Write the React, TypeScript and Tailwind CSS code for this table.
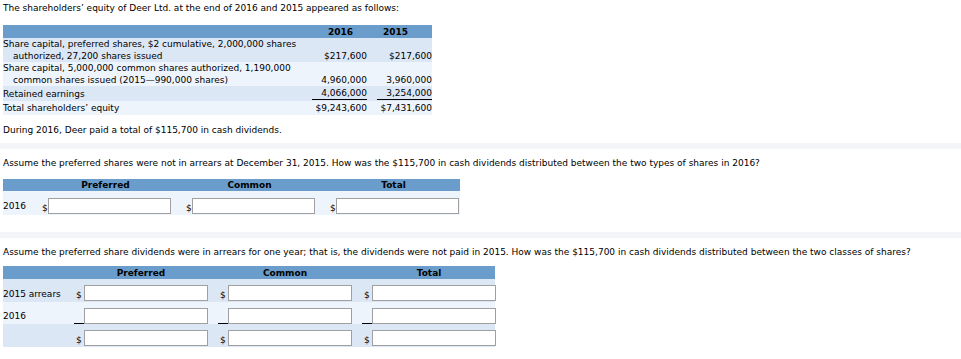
const equityRows = [
    { label: ["Share capital, preferred shares, $2 cumulative, 2,000,000 shares", "authorized, 27,200 shares issued"], v2016: "$217,600", v2015: "$217,600", dark: true },
    { label: ["Share capital, 5,000,000 common shares authorized, 1,190,000", "common shares issued (2015\u2014990,000 shares)"], v2016: "4,960,000", v2015: "3,960,000", dark: false },
    { label: ["Retained earnings"], v2016: "4,066,000", v2015: "3,254,000", dark: true, underline: true },
    { label: ["Total shareholders\u2019 equity"], v2016: "$9,243,600", v2015: "$7,431,600", dark: false },
];

function Field({ cell, input, rule = false }: { cell: string; input: string; rule?: boolean }) {
    return (
        <div className={`${cell} shrink-0 flex items-end justify-end ${rule ? "border-b border-black" : ""}`}>
            <span className="flex-1 leading-[12px] pl-[2px]">{rule ? "" : "$"}</span>
            <input
                type="text"
                className={`${input} shrink-0 h-[16px] border border-[#a0a0a0] bg-white outline-none ${rule ? "-mb-px" : ""}`}
            />
        </div>
    );
}

function Band() {
    return <div className="h-[6px] w-full bg-[#f3f5f8]"></div>;
}

export default function App() {
    return (
        <div className="w-[961px] h-[359px] bg-white text-black text-[9px] leading-[12px] font-['DejaVu_Sans',Verdana,sans-serif] overflow-hidden">
            <div className="px-[3px] pt-[2px]">
                <p>The shareholders&#8217; equity of Deer Ltd. at the end of 2016 and 2015 appeared as follows:</p>

                <div className="w-[429px] mt-[11px]">
                    <div className="flex bg-[#6a9dcc] h-[13px] items-center font-bold">
                        <div className="w-[309px] shrink-0"></div>
                        <div className="w-[55px] shrink-0 pl-[16px]">2016</div>
                        <div className="w-[55px] shrink-0 ml-[10px] pl-[6px]">2015</div>
                    </div>
                    {equityRows.map((row, i) => (
                        <div
                            key={i}
                            className={`flex items-end ${row.dark ? "bg-[#dce7f6]" : "bg-[#eef4fc]"} ${row.label.length === 1 ? "py-px" : ""}`}
                        >
                            <div className="w-[309px] shrink-0">
                                {row.label.map((l, j) => (
                                    <div key={j} className={j > 0 ? "pl-[10px]" : ""}>{l}</div>
                                ))}
                            </div>
                            <div className={`w-[55px] shrink-0 text-right ${row.underline ? "border-b border-black" : ""}`}>{row.v2016}</div>
                            <div className={`w-[55px] shrink-0 ml-[10px] text-right ${row.underline ? "border-b border-black" : ""}`}>{row.v2015}</div>
                        </div>
                    ))}
                </div>

                <p className="mt-[9px]">During 2016, Deer paid a total of $115,700 in cash dividends.</p>
            </div>

            <div className="mt-[7px]">
                <Band />
            </div>

            <div className="px-[3px]">
                <p className="mt-[8px]">
                    Assume the preferred shares were not in arrears at December 31, 2015. How was the $115,700 in cash dividends distributed between the two types of shares in 2016?
                </p>
                <div className="w-[457px] mt-[10px]">
                    <div className="flex bg-[#6a9dcc] h-[12px] items-center font-bold">
                        <div className="w-[37px] shrink-0"></div>
                        <div className="w-[131px] shrink-0 text-center">Preferred</div>
                        <div className="w-[131px] shrink-0 ml-[13px] text-center">Common</div>
                        <div className="w-[131px] shrink-0 ml-[13px] text-center">Total</div>
                    </div>
                    <div className="flex items-end bg-[#eef4fc] pt-[7px] pb-px">
                        <div className="w-[37px] shrink-0 pb-[2px]">2016</div>
                        <Field cell="w-[131px]" input="w-[123px]" />
                        <Field cell="w-[131px] ml-[13px]" input="w-[123px]" />
                        <Field cell="w-[131px] ml-[13px]" input="w-[123px]" />
                    </div>
                </div>
            </div>

            <div className="mt-[17px]">
                <Band />
            </div>

            <div className="px-[3px]">
                <p className="mt-[8px]">
                    Assume the preferred share dividends were in arrears for one year; that is, the dividends were not paid in 2015. How was the $115,700 in cash dividends distributed between the two classes of shares?
                </p>
                <div className="w-[492px] mt-[8px]">
                    <div className="flex bg-[#6a9dcc] h-[13px] items-center font-bold">
                        <div className="w-[71px] shrink-0"></div>
                        <div className="w-[134px] shrink-0 text-center">Preferred</div>
                        <div className="w-[134px] shrink-0 ml-[10px] text-center">Common</div>
                        <div className="w-[134px] shrink-0 ml-[10px] text-center">Total</div>
                    </div>
                    <div className="flex items-end bg-[#dce7f6] pt-[6px] pb-px">
                        <div className="w-[71px] shrink-0 pb-[1px]">2015 arrears</div>
                        <Field cell="w-[134px]" input="w-[124px]" />
                        <Field cell="w-[134px] ml-[10px]" input="w-[124px]" />
                        <Field cell="w-[134px] ml-[10px]" input="w-[124px]" />
                    </div>
                    <div className="flex items-end bg-[#eef4fc] pt-[6px]">
                        <div className="w-[71px] shrink-0 self-start pt-[2px]">2016</div>
                        <Field cell="w-[134px]" input="w-[124px]" rule />
                        <Field cell="w-[134px] ml-[10px]" input="w-[124px]" rule />
                        <Field cell="w-[134px] ml-[10px]" input="w-[124px]" rule />
                    </div>
                    <div className="flex items-end bg-[#dce7f6] pt-[6px] pb-px">
                        <div className="w-[71px] shrink-0"></div>
                        <Field cell="w-[134px]" input="w-[124px]" />
                        <Field cell="w-[134px] ml-[10px]" input="w-[124px]" />
                        <Field cell="w-[134px] ml-[10px]" input="w-[124px]" />
                    </div>
                </div>
            </div>
        </div>
    );
}
